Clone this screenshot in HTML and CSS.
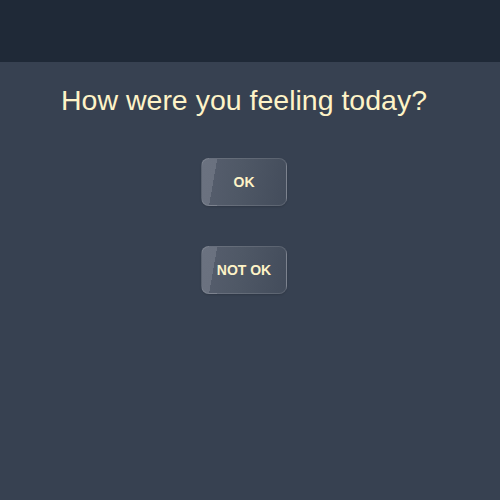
FILE: index.html
```html
<!DOCTYPE html>
<html>
<head>
<meta charset="utf-8">
<link rel="stylesheet" href="styles.css">
</head>
<body>
<header class="topbar"></header>
<main class="content">
  <h1 class="title">How were you feeling today?</h1>
  <div class="choices">
    <button class="choice">OK</button>
    <button class="choice">NOT OK</button>
  </div>
</main>
</body>
</html>
```
FILE: styles.css
```css
html, body {
  margin: 0;
  padding: 0;
  height: 100%;
  background: #374151;
  font-family: "Liberation Sans", Arial, sans-serif;
}
.topbar {
  height: 62px;
  background: #1f2937;
}
.content {
  display: flex;
  flex-direction: column;
  align-items: center;
  padding-right: 12px;
}
.title {
  margin: 20px 0 0;
  font-size: 28.5px;
  font-weight: 400;
  line-height: 36px;
  color: #fef3c7;
}
.choices {
  display: flex;
  flex-direction: column;
  align-items: center;
  gap: 40px;
  margin-top: 40px;
}
.choice {
  width: 86px;
  height: 48px;
  border-radius: 8px;
  border: 1px solid rgba(255, 255, 255, 0.12);
  background: linear-gradient(100deg, #6b7280 0, #6a717f 15px, #545c6b 15px, #4f5866 45%, #434c5b 100%);
  color: #fef3c7;
  font-family: "Liberation Sans", Arial, sans-serif;
  font-weight: 700;
  font-size: 14px;
  padding: 0;
  box-sizing: border-box;
  box-shadow: 0 1px 2px rgba(0,0,0,0.15);
}
```
